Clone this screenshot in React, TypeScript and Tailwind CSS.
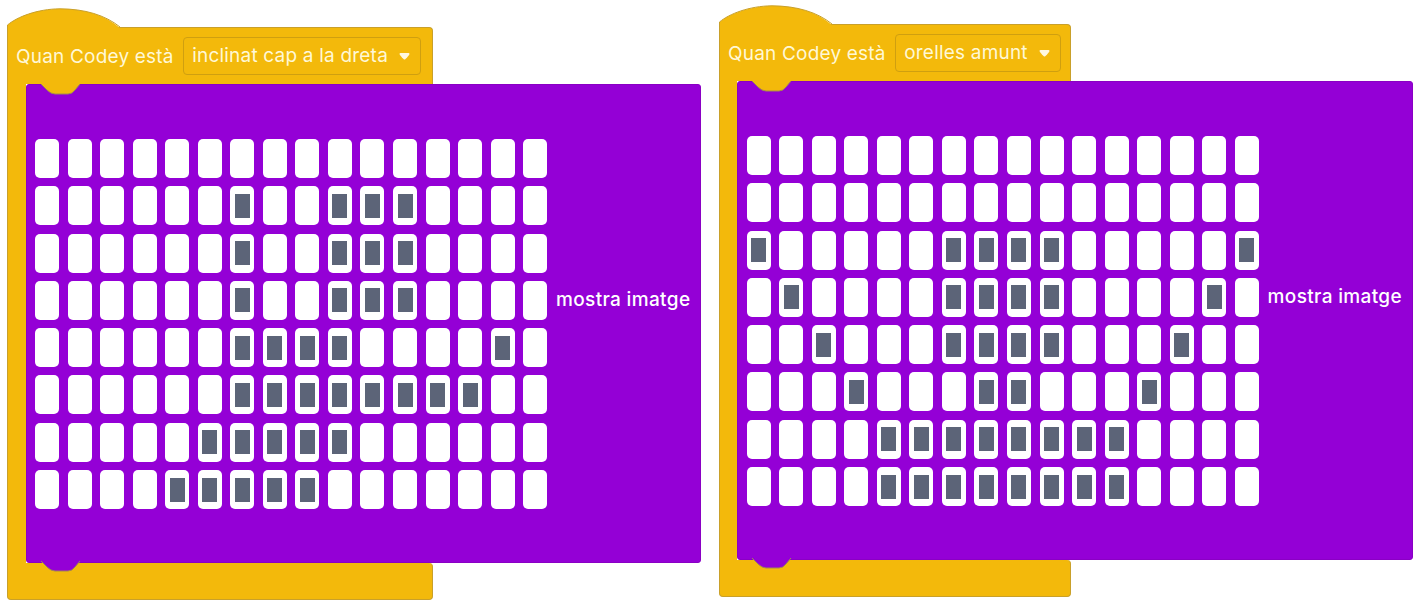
const CELL_COLS = Array.from({ length: 16 }, (_, i) => i);

function range(a: number, b: number) {
  const r: number[] = [];
  for (let i = a; i <= b; i++) r.push(i);
  return r;
}

const leftRows: number[][] = [
  [],
  [6, 9, 10, 11],
  [6, 9, 10, 11],
  [6, 9, 10, 11],
  [6, 7, 8, 9, 14],
  range(6, 13),
  range(5, 9),
  range(4, 8),
];

const rightRows: number[][] = [
  [],
  [],
  [0, 6, 7, 8, 9, 15],
  [1, 6, 7, 8, 9, 14],
  [2, 6, 7, 8, 9, 13],
  [3, 7, 8, 12],
  range(4, 11),
  range(4, 11),
];

function Hat() {
  return (
    <svg width="114" height="20" viewBox="0 0 114 20" className="relative z-10 -mb-px block">
      <path d="M0.5 20 L0.5 17 C10 9 30 1 53 0.8 C78 1 98 7 113 20 Z" fill="#f3b90b" />
      <path d="M0.5 20 L0.5 17 C10 9 30 1 53 0.8 C78 1 98 7 113 19" fill="none" stroke="#c9a02a" />
    </svg>
  );
}

function Notch({ fill, stroke, className }: { fill: string; stroke: string; className: string }) {
  return (
    <svg width="40" height="11" viewBox="0 0 40 11" className={className}>
      <path d="M0 0 L6 6 Q10 10 14 10 L27 10 Q31 10 34 6 L39 0 Z" fill={fill} />
      <path d="M0 0 L6 6 Q10 10 14 10 L27 10 Q31 10 34 6 L39 0" fill="none" stroke={stroke} />
    </svg>
  );
}

function Grid({ rows }: { rows: number[][] }) {
  return (
    <div className="flex w-[512px] flex-col gap-[8.3px]">
      {rows.map((row, r) => (
        <div key={r} className="flex gap-[8.56px]">
          {CELL_COLS.map((c) => (
            <div
              key={c}
              className="flex h-[39px] w-[24px] shrink-0 items-center justify-center rounded-[5px] bg-white"
            >
              {row.includes(c) && <div className="h-[24px] w-[15px] bg-[#5c6478]" />}
            </div>
          ))}
        </div>
      ))}
    </div>
  );
}

function Block({
  label,
  yellowWidth,
  armWidth,
  panelClass,
  rows,
  className,
}: {
  label: string;
  yellowWidth: string;
  armWidth: string;
  panelClass: string;
  rows: number[][];
  className: string;
}) {
  return (
    <div className={className}>
      <Hat />
      <div
        className={`flex h-[57px] items-center gap-[9.5px] rounded-tr-[4px] border-t border-r border-l border-[#c9a02a] bg-[#f3b90b] pl-[8px] text-[19px] tracking-[0.2px] text-[#fff8d6] ${yellowWidth}`}
      >
        <span className="whitespace-nowrap pt-[2px]">Quan Codey està</span>
        <div className="flex h-[38px] items-center gap-[11px] rounded-[4px] border border-[#cf9f10] pr-[10px] pl-[8px]">
          <span className="whitespace-nowrap pt-[1px]">{label}</span>
          <svg width="11" height="7" viewBox="0 0 11 7">
            <path d="M0.5 1 Q0.5 0 1.5 0 L9.5 0 Q10.5 0 10.5 1 Q10 2.5 6.5 6 Q5.5 7 4.5 6 Q1 2.5 0.5 1 Z" fill="#fff8e0" />
          </svg>
        </div>
      </div>
      <div className="flex">
        <div className={`border-l border-[#c9a02a] bg-[#f3b90b] ${armWidth}`} />
        <div
          className={`relative z-10 flex h-[479px] items-start rounded-[3px] border border-[#8a00c4] bg-[#9400d6] pt-[54px] font-medium text-white ${panelClass}`}
        >
          <Notch fill="#f3b90b" stroke="#a08a50" className="absolute top-[-1px] left-[14px]" />
          <Grid rows={rows} />
          <span className="mt-[150px] ml-[9px] whitespace-nowrap text-[19px] leading-[22px] tracking-[0.35px]">
            mostra imatge
          </span>
          <Notch fill="#9400d6" stroke="#a08a50" className="absolute bottom-[-10px] left-[14px]" />
        </div>
      </div>
      <div
        className={`h-[37px] rounded-b-[4px] rounded-tr-[4px] border-r border-b border-l border-[#c9a02a] bg-[#f3b90b] ${yellowWidth}`}
      />
    </div>
  );
}

export default function App() {
  return (
    <div
      className="flex h-[606px] w-[1422px] overflow-hidden bg-white pl-[7px]"
      style={{ fontFamily: 'Inter, sans-serif' }}
    >
      <Block
        label="inclinat cap a la dreta"
        yellowWidth="w-[426px]"
        armWidth="w-[19px]"
        panelClass="w-[675px] pl-[8px]"
        rows={leftRows}
        className="mt-[8px] w-[694px] shrink-0"
      />
      <Block
        label="orelles amunt"
        yellowWidth="w-[352px]"
        armWidth="w-[18px]"
        panelClass="w-[676px] pl-[8.6px]"
        rows={rightRows}
        className="mt-[5px] ml-[18px] w-[694px] shrink-0"
      />
    </div>
  );
}
